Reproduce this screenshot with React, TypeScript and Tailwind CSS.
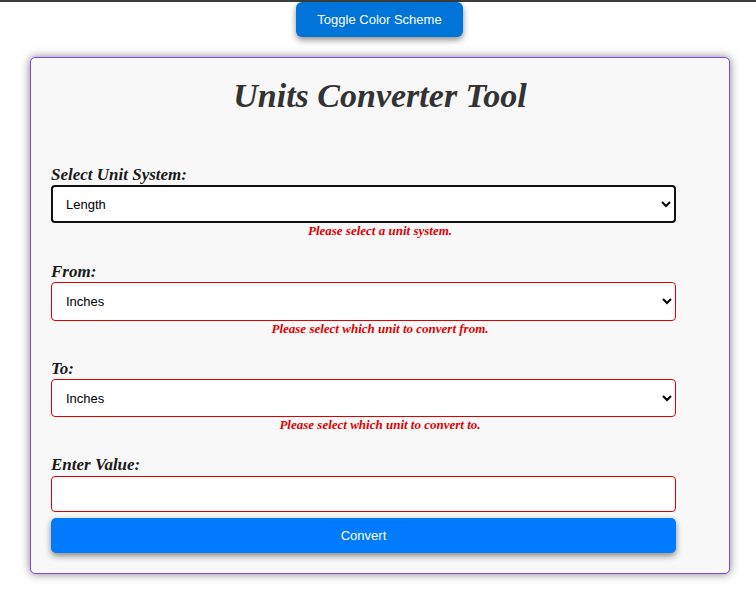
import React, { useState } from 'react';

const serif = "font-['Liberation_Serif','Times_New_Roman',serif]";

const units = ['Inches', 'Feet', 'Yards', 'Miles', 'Centimeters', 'Meters', 'Kilometers'];

export default function App() {
  const [system, setSystem] = useState('Length');
  const [from, setFrom] = useState('Inches');
  const [to, setTo] = useState('Inches');
  const [value, setValue] = useState('');

  return (
    <div className="min-h-[611px] bg-white border-t-2 border-[#3c3c3c] font-['Liberation_Sans',Arial,sans-serif]">
      <div className="flex justify-center">
        <button className="ml-[3px] h-[35px] w-[167px] rounded-[6px] bg-[#0074d9] text-[13px] text-white shadow-[0_3px_6px_rgba(0,0,0,0.45)]">
          Toggle Color Scheme
        </button>
      </div>

      <div className="mt-[20px] ml-[30px] w-[700px] rounded-[5px] border border-[#8446e0] bg-[#f8f8f8] px-[20px] pt-[18px] pb-[20px] shadow-[0_0_10px_rgba(0,0,0,0.5)]">
        <h1 className={`${serif} text-center text-[34px] leading-[40px] font-bold italic text-[#333]`}>
          Units Converter Tool
        </h1>

        <div className="mt-[49px] w-[625px]">
          <label className={`${serif} block text-[17px] leading-[19px] font-bold italic text-[#1a1a1a]`}>
            Select Unit System:
          </label>
          <select
            value={system}
            onChange={e => setSystem(e.target.value)}
            className="mt-[1px] block h-[38px] w-full rounded-[4px] border-2 border-[#111] bg-white pl-[9px] pr-[6px] text-[13px] text-black"
          >
            <option>Length</option>
            <option>Weight</option>
            <option>Volume</option>
          </select>
        </div>
        <p className={`${serif} w-[658px] text-center text-[13px] leading-[16px] font-bold italic text-[#e00000]`}>
          Please select a unit system.
        </p>

        <div className="mt-[23px] w-[625px]">
          <label className={`${serif} block text-[17px] leading-[19px] font-bold italic text-[#1a1a1a]`}>
            From:
          </label>
          <select
            value={from}
            onChange={e => setFrom(e.target.value)}
            className="mt-[1px] block h-[39px] w-full rounded-[4px] border border-[#e00000] bg-white pl-[10px] pr-[7px] text-[13px] text-black"
          >
            {units.map(u => <option key={u}>{u}</option>)}
          </select>
        </div>
        <p className={`${serif} w-[658px] text-center text-[13px] leading-[16px] font-bold italic text-[#e00000]`}>
          Please select which unit to convert from.
        </p>

        <div className="mt-[22px] w-[625px]">
          <label className={`${serif} block text-[17px] leading-[19px] font-bold italic text-[#1a1a1a]`}>
            To:
          </label>
          <select
            value={to}
            onChange={e => setTo(e.target.value)}
            className="mt-[1px] block h-[38px] w-full rounded-[4px] border border-[#e00000] bg-white pl-[10px] pr-[7px] text-[13px] text-black"
          >
            {units.map(u => <option key={u}>{u}</option>)}
          </select>
        </div>
        <p className={`${serif} w-[658px] text-center text-[13px] leading-[16px] font-bold italic text-[#e00000]`}>
          Please select which unit to convert to.
        </p>

        <div className="mt-[22px] w-[625px]">
          <label className={`${serif} block text-[17px] leading-[19px] font-bold italic text-[#1a1a1a]`}>
            Enter Value:
          </label>
          <input
            value={value}
            onChange={e => setValue(e.target.value)}
            className="mt-[2px] block h-[36px] w-full rounded-[4px] border border-[#e00000] bg-white px-[12px] text-[13px] text-black outline-none"
          />
          <button className="mt-[6px] block h-[35px] w-full rounded-[5px] bg-[#007bff] text-[13px] text-white shadow-[0_3px_6px_rgba(0,0,0,0.45)]">
            Convert
          </button>
        </div>
      </div>
    </div>
  );
}
